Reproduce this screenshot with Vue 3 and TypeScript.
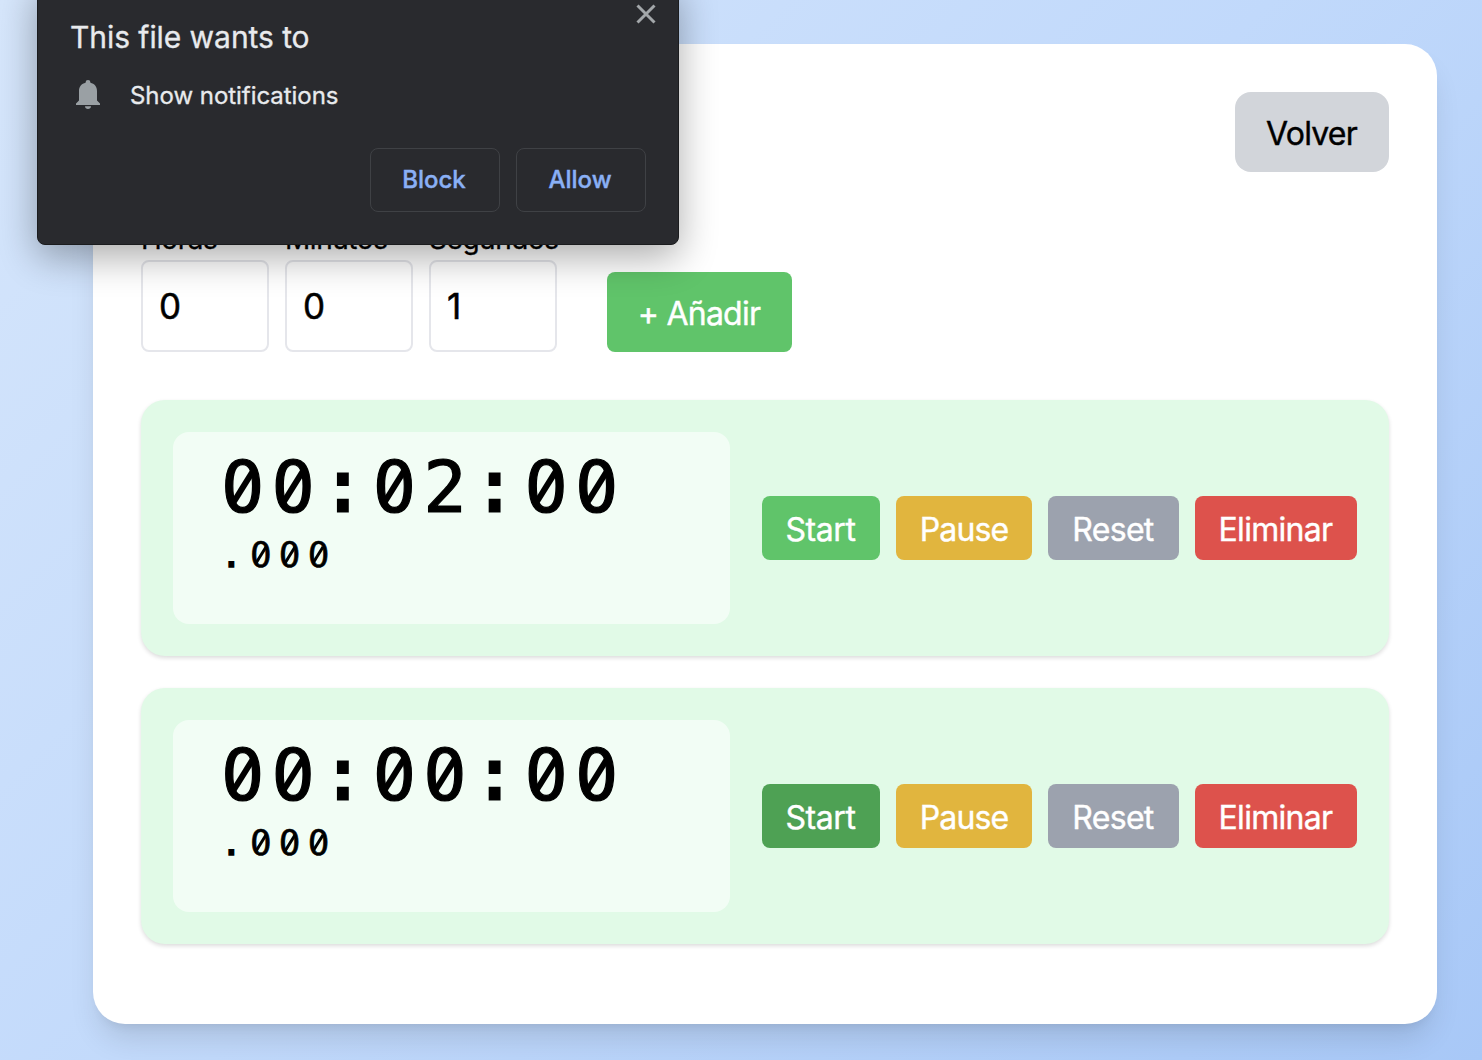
<script setup lang="ts">
import { ref } from 'vue'

interface Field {
  id: string
  label: string
  value: number
}

interface Timer {
  id: number
  time: string
  millis: string
  active: boolean
}

const fields = ref<Field[]>([
  { id: 'horas', label: 'Horas', value: 0 },
  { id: 'minutos', label: 'Minutos', value: 0 },
  { id: 'segundos', label: 'Segundos', value: 1 },
])

const timers = ref<Timer[]>([
  { id: 1, time: '00:02:00', millis: '.000', active: false },
  { id: 2, time: '00:00:00', millis: '.000', active: true },
])
</script>

<template>
  <div class="page">
    <main class="panel">
      <header class="top">
        <button class="back"><span>Volver</span></button>
      </header>

      <section class="form">
        <div v-for="f in fields" :key="f.id" class="field">
          <label :for="f.id">{{ f.label }}</label>
          <input :id="f.id" v-model="f.value" type="text" />
        </div>
        <button class="add"><span>+ Añadir</span></button>
      </section>

      <section class="list">
        <article v-for="t in timers" :key="t.id" class="timer">
          <div class="display">
            <div class="time">
              <span v-for="(c, i) in t.time" :key="i" :class="{ zero: c === '0', mark: c === ':' }">{{ c }}</span>
            </div>
            <div class="millis">
              <span v-for="(c, i) in t.millis" :key="i" :class="{ zero: c === '0', mark: c === '.' }">{{ c }}</span>
            </div>
          </div>
          <div class="actions">
            <button class="btn start" :class="{ active: t.active }"><span>Start</span></button>
            <button class="btn pause"><span>Pause</span></button>
            <button class="btn reset"><span>Reset</span></button>
            <button class="btn remove"><span>Eliminar</span></button>
          </div>
        </article>
      </section>
    </main>

    <aside class="prompt">
      <svg class="close" viewBox="0 0 20 20" width="20" height="20">
        <path d="M1.500 1.500 18.500 18.500M18.500 1.500 1.500 18.500" fill="none" stroke="#a3a7aa" stroke-width="3" />
      </svg>
      <h2><span>This file wants to</span></h2>
      <div class="permission">
        <svg viewBox="0 0 24 29" width="24" height="29">
          <path
            d="M0 25v-1.500l3-3V11C3 6.500 5.600 3.600 9.600 2.700V2.200a2.400 2.200 0 0 1 4.800 0v.5C18.400 3.600 21 6.500 21 11v9.500l3 3V25ZM9 26.200h6c0 1.700-1.400 2.800-3 2.800s-3-1.100-3-2.800Z"
            fill="#9aa0a4"
          />
        </svg>
        <span>Show notifications</span>
      </div>
      <div class="choices">
        <button><span>Block</span></button>
        <button><span>Allow</span></button>
      </div>
    </aside>
  </div>
</template>

<style>
body {
  margin: 0;
  overflow: hidden;
}
</style>

<style scoped>
* {
  box-sizing: border-box;
}

.page {
  position: relative;
  width: 1482px;
  height: 1060px;
  padding: 44px 45px 36px 93px;
  overflow: hidden;
  background: linear-gradient(135deg, #d6e6fb 0%, #c1d9fb 50%, #a8c8f7 100%);
  font-family: Inter, 'Liberation Sans', sans-serif;
  color: #000;
  -webkit-text-stroke: 0.3px currentColor;
}

button {
  display: flex;
  align-items: center;
  justify-content: center;
  margin: 0;
  padding: 2px 1px 0 0;
  border: 0;
  font-family: inherit;
  font-size: 32px;
  white-space: nowrap;
  -webkit-text-stroke: 0.4px currentColor;
}

.panel {
  display: flex;
  flex-direction: column;
  height: 980px;
  padding: 48px;
  border-radius: 32px;
  background: #fff;
  box-shadow: 0 20px 30px -6px rgba(0, 0, 0, 0.12), 0 8px 12px -8px rgba(0, 0, 0, 0.1);
}

.top {
  display: flex;
  justify-content: flex-end;
  height: 80px;
}

.back {
  width: 154px;
  height: 80px;
  border-radius: 16px;
  background: #d2d5da;
  color: #000;
  letter-spacing: -0.8px;
}

.form {
  display: flex;
  align-items: flex-end;
  gap: 16px;
  height: 132px;
  margin-top: 48px;
}

.field {
  display: flex;
  flex-direction: column;
  width: 128px;
}

.field label {
  height: 40px;
  line-height: 39px;
  font-size: 28px;
  letter-spacing: -0.45px;
  white-space: nowrap;
}

.field input {
  width: 128px;
  height: 92px;
  padding: 0 16px;
  border: 2px solid #e5e6eb;
  border-radius: 8px;
  outline: none;
  background: #fff;
  color: #000;
  font-family: inherit;
  font-size: 35px;
  -webkit-text-stroke: 0.5px #000;
}

.add {
  width: 185px;
  height: 80px;
  margin-left: 34px;
  border-radius: 8px;
  background: #60c46a;
  color: #fff;
  letter-spacing: -0.75px;
}

.list {
  display: flex;
  flex-direction: column;
  gap: 32px;
  margin-top: 48px;
}

.timer {
  display: flex;
  align-items: center;
  justify-content: space-between;
  height: 256px;
  padding: 32px;
  border-radius: 24px;
  background: #e1fae7;
  box-shadow: 0 2px 4px rgba(0, 0, 0, 0.14);
}

.display {
  width: 557px;
  height: 192px;
  padding: 15px 48px;
  border-radius: 16px;
  background: #f2fdf5;
  font-family: 'DejaVu Sans Mono', 'Liberation Mono', monospace;
  font-weight: 400;
  letter-spacing: 7.2px;
}

.time,
.millis {
  display: flex;
  -webkit-text-stroke: 0.017em #000;
}

.time {
  height: 80px;
  line-height: 80px;
  font-size: 72px;
}

.millis {
  height: 56px;
  line-height: 56px;
  font-size: 36px;
}

.mark {
  position: relative;
  left: -0.012em;
  top: -0.008em;
  -webkit-text-stroke: 0.042em #000;
}

/* Slashed zero: hides the glyph's centre dot and draws a diagonal bar. */
.zero {
  position: relative;
}

.zero::before,
.zero::after {
  content: '';
  position: absolute;
  top: 50%;
  left: 0.301em;
  transform: translate(-50%, -50%);
}

.zero::before {
  width: 0.2em;
  height: 0.3em;
  border-radius: 50%;
  background: #f2fdf5;
}

.zero::after {
  width: 0.082em;
  height: 0.52em;
  background: #000;
  transform: translate(-50%, -50%) rotate(32deg);
}

.actions {
  display: flex;
  gap: 16px;
}

.btn {
  height: 64px;
  border-radius: 8px;
  color: #fff;
  letter-spacing: -0.7px;
}

.start {
  width: 118px;
  background: #60c46a;
  letter-spacing: -0.4px;
}

.start.active {
  background: #4ea154;
}

.pause {
  width: 136px;
  padding-right: 0;
  background: #e1b53e;
  letter-spacing: -0.9px;
}

.reset {
  width: 131px;
  background: #9ca2ae;
}

.remove {
  width: 162px;
  background: #dd524c;
}

.prompt {
  position: absolute;
  top: -20px;
  left: 37px;
  display: flex;
  flex-direction: column;
  width: 642px;
  height: 265px;
  padding: 36px 33px 32px 32px;
  border: 1px solid #1b1c1e;
  border-radius: 8px;
  background: #292a2e;
  box-shadow: 0 12px 38px rgba(0, 0, 0, 0.33);
  color: #e8eaed;
  -webkit-text-stroke: 0.3px currentColor;
}

.close {
  position: absolute;
  top: 23px;
  right: 22px;
}

.prompt h2 {
  height: 40px;
  margin: 0;
  line-height: 40px;
  font-size: 30px;
  font-weight: 400;
  letter-spacing: -0.06px;
  white-space: nowrap;
}

.permission {
  display: flex;
  align-items: center;
  gap: 30px;
  height: 40px;
  margin: 18px 0 0 6px;
  font-size: 24px;
  letter-spacing: -0.04px;
  white-space: nowrap;
}

.permission svg {
  margin-bottom: 2px;
}

.choices {
  display: flex;
  justify-content: flex-end;
  gap: 16px;
  margin-top: auto;
  margin-right: -1px;
}

.choices button {
  width: 130px;
  height: 64px;
  padding: 0 2px 1px 0;
  border: 1px solid #3f4145;
  border-radius: 8px;
  background: transparent;
  color: #8ab0f5;
  font-size: 24px;
  font-weight: 500;
}
</style>
